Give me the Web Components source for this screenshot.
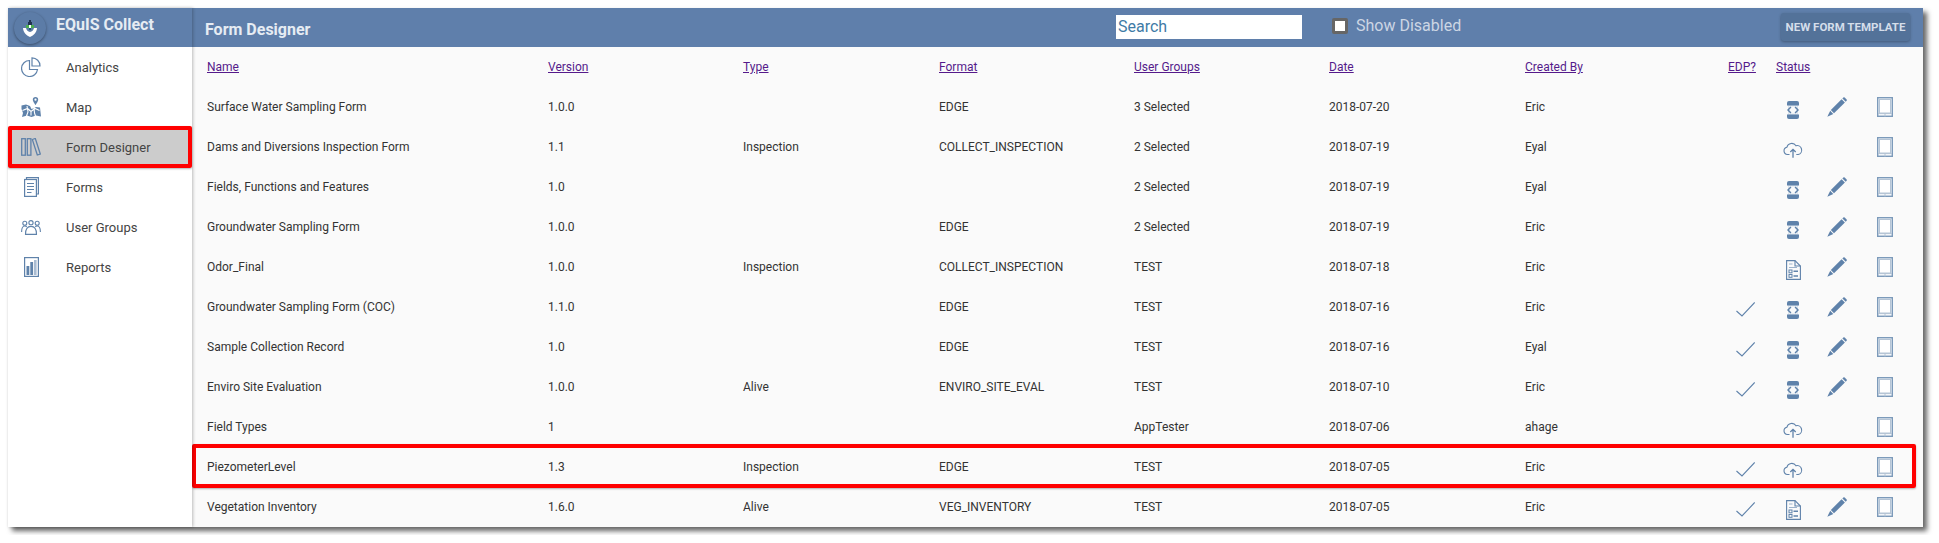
<!DOCTYPE html>
<html>
<head>
<meta charset="utf-8">
<title>EQuIS Collect</title>
<style>
  html, body { margin: 0; background: #fff; }
  body { padding: 8px 16px 8px 8px; font-family: Roboto, "Liberation Sans", sans-serif; }
</style>
</head>
<body>
<app-window>
  <side-nav slot="side" title-text="EQuIS Collect">
    <nav-item icon="pie">Analytics</nav-item>
    <nav-item icon="map">Map</nav-item>
    <nav-item icon="books" active>Form Designer</nav-item>
    <nav-item icon="forms">Forms</nav-item>
    <nav-item icon="users">User Groups</nav-item>
    <nav-item icon="bars">Reports</nav-item>
  </side-nav>
  <top-bar slot="top">Form Designer</top-bar>
  <form-table slot="main"></form-table>
</app-window>

<script>
const BLUE = '#5f82aa';

// icons are all drawn by hand to match the reference
const ICONS = {
  pie: `<svg width="20" height="20" viewBox="0 0 20 20" fill="none" stroke="${BLUE}" stroke-width="1.2"><path d="M8.500 3.500a8 8 0 1 0 8 9h-8z"/><path d="M11 .8a8 8 0 0 1 8 8.200h-8z"/></svg>`,
  map: `<svg width="20" height="20" viewBox="0 0 20 20" fill="${BLUE}"><path d="M14.500 0a2.700 2.700 0 0 1 2.700 2.700c0 1.800-2.700 5.300-2.700 5.300s-2.700-3.500-2.700-5.300A2.700 2.700 0 0 1 14.500 0zm0 1.600a1.100 1.100 0 1 0 0 2.200 1.100 1.100 0 0 0 0-2.200z"/><path d="M.5 8.500l4.500-1 4 1.500 1.500 3 3-1 1.500-1 4 .5 1 9-5-1-4.500 1.500-4.500-1.500-5 1.500 1-4-1.500-4z"/><path d="M1.500 13.500l5-2 3.500 3 4-3 4.500 2M6 9l1 6-1.500 4M13 11l.5 5 1 3M10 14.500v4" fill="none" stroke="#fff" stroke-width="1.100"/></svg>`,
  books: `<svg width="20" height="18" viewBox="0 0 20 18" fill="none" stroke="${BLUE}" stroke-width="1.300"><rect x=".7" y=".7" width="3.600" height="16.500"/><rect x="6.300" y=".7" width="3.600" height="16.500"/><path d="M11.300 1.500l3-1 5 15.500-3 1z"/></svg>`,
  forms: `<svg width="15" height="20" viewBox="0 0 15 20" fill="none" stroke="${BLUE}" stroke-width="1.200"><path d="M2.500 2.500V.6h11.900v16.400h-2"/><rect x=".6" y="2.500" width="11.800" height="16.900"/><path d="M3 6.500h7M3 9.500h7M3 12.500h7M3 15.500h4.500"/></svg>`,
  users: `<svg width="20" height="15" viewBox="0 0 20 15" fill="none" stroke="${BLUE}" stroke-width="1.100"><circle cx="3.800" cy="3.200" r="2"/><circle cx="10" cy="2.700" r="2.100"/><circle cx="16.200" cy="3.200" r="2"/><path d="M.6 12c0-3.500 1-6 3.200-6 .9 0 1.500.3 2 .8M19.400 12c0-3.500-1-6-3.200-6-.9 0-1.500.3-2 .8"/><path d="M4.500 14.400c0-5 2-8 5.500-8s5.500 3 5.500 8z"/></svg>`,
  bars: `<svg width="15" height="20" viewBox="0 0 15 20" fill="${BLUE}"><rect x=".6" y=".6" width="13.800" height="18.800" fill="none" stroke="${BLUE}" stroke-width="1.200"/><rect x="2.500" y="9" width="2.800" height="9"/><rect x="6.300" y="5" width="2.800" height="13"/><rect x="10" y="3" width="2.600" height="15" fill="#a9bcd2"/></svg>`,
  code: `<svg width="12" height="18" viewBox="0 0 12 18"><path d="M1 3h10v12H1z" fill="#dbe3ec"/><path d="M2 0h8a2 2 0 0 1 2 2v2.500H0V2a2 2 0 0 1 2-2zM0 13.500h12V16a2 2 0 0 1-2 2H2a2 2 0 0 1-2-2z" fill="${BLUE}"/><path d="M2 5.500h8v7H2z" fill="#fafafa"/><path d="M3.900 6L1 9l2.900 3M8.100 6L11 9l-2.900 3" fill="none" stroke="${BLUE}" stroke-width="1.500"/></svg>`,
  cloud: `<svg width="20" height="16" viewBox="0 0 20 16" fill="none" stroke="${BLUE}" stroke-width="1.100"><path d="M6.500 12.500H4.500a3.700 3.700 0 0 1-.6-7.300A5 5 0 0 1 13 3.800a4.400 4.400 0 0 1 2.300 8.700h-2"/><path d="M10 15.800V7.500M7.300 10L10 7.300 12.700 10" stroke-width="1.300"/></svg>`,
  doc: `<svg width="15" height="20" viewBox="0 0 15 20" fill="none" stroke="${BLUE}" stroke-width="1.100"><path d="M.6.600h8.400l5.400 5.400v13.400H.6z"/><path d="M9 .600V6h5.400"/><path d="M3 4h3.500M3 7.500h8" stroke="#9db3cb"/><rect x="3" y="10" width="3" height="2.800" stroke-width="1"/><rect x="3" y="14.500" width="3" height="2.800" stroke-width="1"/><path d="M7.500 11.300H12M7.500 16H12" stroke-width="1.400"/></svg>`,
  pencil: `<svg width="20" height="20" viewBox="0 0 20 20" fill="${BLUE}"><path d="M3.800 13L14.600 2.200l3.300 3.300L7 16.300z"/><path d="M15.400 1.400l.9-.9a1 1 0 0 1 1.400 0l1.900 1.900a1 1 0 0 1 0 1.400l-.9.9z"/><path d="M3.200 13.800L6.300 16.900.3 19.700z"/></svg>`,
  tablet: `<svg width="16" height="20" viewBox="0 0 16 20"><rect x=".7" y=".7" width="14.600" height="18.600" fill="#f2f5f8" stroke="#7c9aba" stroke-width="1.400"/><rect x="2.500" y="2.500" width="11" height="13.500" fill="#fff" stroke="#b5c4d5"/><path d="M1 16.500h14M8 16.500v3" stroke="#b5c4d5"/></svg>`,
  check: `<svg width="19" height="15" viewBox="0 0 19 15" fill="none" stroke="${BLUE}" stroke-width="1.100"><path d="M.5 9l5.500 5L18.700.5"/></svg>`,
};

customElements.define('app-window', class extends HTMLElement {
  constructor() {
    super();
    this.attachShadow({ mode: 'open' });
    this.shadowRoot.innerHTML = `
      <style>
      :host {
        display: grid;
        grid-template-columns: 184px minmax(0, 1fr);
        grid-template-rows: 39px 480px;
        height: 519px;
        background: #fafafa;
        box-shadow: 4px 4px 5px #666;
        position: relative;
      }
      ::slotted([slot=side]) { grid-row: 1 / 3; }
      .mark {
        position: absolute;
        left: 184px;
        top: 436px;
        width: 1724px;
        height: 44px;
        box-sizing: border-box;
        border: 4px solid #f00;
        border-radius: 2px;
        box-shadow: 0 1px 2px rgba(0,0,0,.3);
        pointer-events: none;
      }
      </style>
      <slot name="side"></slot>
      <slot name="top"></slot>
      <slot name="main"></slot>
      <div class="mark"></div>
    `;
  }
});

customElements.define('side-nav', class extends HTMLElement {
  constructor() {
    super();
    this.attachShadow({ mode: 'open' });
    this.shadowRoot.innerHTML = `
      <style>
      :host {
        display: block;
        background: #fff;
        box-shadow: 1px 0 3px rgba(0,0,0,.25);
        position: relative;
        z-index: 1;
      }
      header {
        height: 39px;
        background: #5f7fab;
        display: flex;
        align-items: flex-start;
        gap: 10px;
        padding: 4px 0 0 6px;
        box-sizing: border-box;
      }
      .logo {
        width: 32px;
        height: 32px;
        border-radius: 50%;
        background: #5c7ca7;
        box-shadow: 0 1px 3px rgba(0,0,0,.4);
        display: flex;
        align-items: center;
        justify-content: center;
        flex: none;
      }
      h1 {
        margin: 0;
        font: 700 16px/26px Roboto, sans-serif;
        color: #e6ecf3;
      }
      </style>
      <header>
        <div class="logo">
          <svg width="14" height="17" viewBox="0 0 14 17">
            <rect x="6" y="0" width="2" height="2" fill="#1f3350"/>
            <rect x="5" y="2" width="4" height="3" fill="#1f3350"/>
            <rect x="3" y="5" width="3" height="3" fill="#4caf50"/>
            <rect x="8" y="5" width="3" height="3" fill="#4caf50"/>
            <rect x="6" y="5" width="2" height="3" fill="#fff"/>
            <rect x="6" y="8" width="2" height="2" fill="#1f5f6f"/>
            <path d="M0 8l3 0c.5 2.500 2 3.500 4 4 2-.5 3.500-1.500 4-4l3 0c-.3 4-3 7.500-7 9-4-1.500-6.700-5-7-9z" fill="#fff"/>
          </svg>
        </div>
        <h1>${this.getAttribute('title-text')}</h1>
      </header>
      <slot></slot>
    `;
  }
});

customElements.define('nav-item', class extends HTMLElement {
  constructor() {
    super();
    this.attachShadow({ mode: 'open' });
    this.shadowRoot.innerHTML = `
      <style>
      :host {
        display: flex;
        align-items: center;
        height: 40px;
        font: 13px Roboto, sans-serif;
        color: #444;
        position: relative;
      }
      :host([active]) { background: #ccc; }
      .icon {
        width: 20px;
        margin: 0 25px 0 13px;
        display: flex;
        align-items: center;
        justify-content: center;
        flex: none;
      }
      .mark {
        display: none;
        position: absolute;
        inset: -1px 0 -1px 0;
        border: 4px solid #f00;
        border-radius: 2px;
        box-shadow: 0 1px 2px rgba(0,0,0,.3);
      }
      :host([active]) .mark { display: block; }
      </style>
      <span class="icon">${ICONS[this.getAttribute('icon')]}</span>
      <slot></slot>
      <span class="mark"></span>
    `;
  }
});

customElements.define('top-bar', class extends HTMLElement {
  constructor() {
    super();
    this.attachShadow({ mode: 'open' });
    this.shadowRoot.innerHTML = `
      <style>
      :host {
        display: flex;
        align-items: center;
        height: 39px;
        background: #5f7fab;
        padding: 0 13px;
        font-family: Roboto, sans-serif;
      }
      h2 {
        margin: 0;
        width: 911px;
        flex: none;
        font: 700 16px Roboto, sans-serif;
        color: #e6ecf3;
        padding-top: 4px;
      }
      input[type=text] {
        width: 186px;
        height: 24px;
        box-sizing: border-box;
        border: 0;
        padding: 0 2px;
        margin: -2px 30px 0 0;
        font: 16px Roboto, sans-serif;
        background: #fff;
        flex: none;
      }
      input::placeholder { color: #3f7ba6; opacity: 1; }
      .box {
        width: 16px;
        height: 16px;
        box-sizing: border-box;
        border: 3px solid #666;
        border-radius: 2px;
        background: #fff;
        flex: none;
        margin: -3px 8px 0 0;
      }
      label {
        color: #ccd6e4;
        font-size: 16px;
        margin-top: -4px;
        flex: 1;
        min-width: 0;
      }
      button {
        flex: none;
        width: 129px;
        height: 28px;
        margin-top: -1px;
        border: 0;
        border-radius: 3px;
        background: #537299;
        color: #d5deea;
        font: 700 11.5px Roboto, sans-serif;
        box-shadow: 0 1px 3px rgba(0,0,0,.3);
        padding: 0;
        white-space: nowrap;
      }
      </style>
      <h2><slot></slot></h2>
      <input type="text" placeholder="Search">
      <span class="box"></span>
      <label>Show Disabled</label>
      <button>NEW FORM TEMPLATE</button>
    `;
  }
});

const COLUMNS = '341px 195px 196px 195px 195px 196px 203px 48px 34px 54px 42px';

customElements.define('form-row', class extends HTMLElement {
  constructor() {
    super();
    this.attachShadow({ mode: 'open' });
    const [name, version, type, format, groups, date, by] = JSON.parse(this.getAttribute('cells'));
    const status = this.getAttribute('status');
    this.shadowRoot.innerHTML = `
      <style>
      :host {
        display: grid;
        grid-template-columns: ${COLUMNS};
        align-items: center;
        height: 40px;
        font: 12px Roboto, sans-serif;
        color: #333;
      }
      .ic { display: flex; justify-content: center; }
      .check { justify-content: flex-start; padding: 5px 0 0 8px; }
      .status { padding-top: 5px; }
      </style>
      <span>${name}</span><span>${version}</span><span>${type}</span><span>${format}</span>
      <span>${groups}</span><span>${date}</span><span>${by}</span>
      <span class="ic check">${this.hasAttribute('edp') ? ICONS.check : ''}</span>
      <span class="ic status">${ICONS[status]}</span>
      <span class="ic pencil">${this.hasAttribute('edit') ? ICONS.pencil : ''}</span>
      <span class="ic tablet">${ICONS.tablet}</span>
    `;
  }
});

customElements.define('form-table', class extends HTMLElement {
  constructor() {
    super();
    this.attachShadow({ mode: 'open' });
    const heads = ['Name', 'Version', 'Type', 'Format', 'User Groups', 'Date', 'Created By', 'EDP?', 'Status'];
    const rows = [
      ['Surface Water Sampling Form', '1.0.0', '', 'EDGE', '3 Selected', '2018-07-20', 'Eric', 0, 'code', 1],
      ['Dams and Diversions Inspection Form', '1.1', 'Inspection', 'COLLECT_INSPECTION', '2 Selected', '2018-07-19', 'Eyal', 0, 'cloud', 0],
      ['Fields, Functions and Features', '1.0', '', '', '2 Selected', '2018-07-19', 'Eyal', 0, 'code', 1],
      ['Groundwater Sampling Form', '1.0.0', '', 'EDGE', '2 Selected', '2018-07-19', 'Eric', 0, 'code', 1],
      ['Odor_Final', '1.0.0', 'Inspection', 'COLLECT_INSPECTION', 'TEST', '2018-07-18', 'Eric', 0, 'doc', 1],
      ['Groundwater Sampling Form (COC)', '1.1.0', '', 'EDGE', 'TEST', '2018-07-16', 'Eric', 1, 'code', 1],
      ['Sample Collection Record', '1.0', '', 'EDGE', 'TEST', '2018-07-16', 'Eyal', 1, 'code', 1],
      ['Enviro Site Evaluation', '1.0.0', 'Alive', 'ENVIRO_SITE_EVAL', 'TEST', '2018-07-10', 'Eric', 1, 'code', 1],
      ['Field Types', '1', '', '', 'AppTester', '2018-07-06', 'ahage', 0, 'cloud', 0],
      ['PiezometerLevel', '1.3', 'Inspection', 'EDGE', 'TEST', '2018-07-05', 'Eric', 1, 'cloud', 0],
      ['Vegetation Inventory', '1.6.0', 'Alive', 'VEG_INVENTORY', 'TEST', '2018-07-05', 'Eric', 1, 'doc', 1],
    ];
    const attr = s => JSON.stringify(s).replace(/"/g, '&quot;');
    this.shadowRoot.innerHTML = `
      <style>
      :host {
        display: block;
        padding-left: 15px;
        background: #fafafa;
        overflow: hidden;
      }
      .head {
        display: grid;
        grid-template-columns: ${COLUMNS};
        align-items: center;
        height: 40px;
        font: 12px Roboto, sans-serif;
      }
      a { color: #551a8b; text-decoration: underline; }
      </style>
      <div class="head">${heads.map(h => `<span><a href="#">${h}</a></span>`).join('')}</div>
      ${rows.map(r => `<form-row cells="${attr(r.slice(0, 7))}" status="${r[8]}"${r[7] ? ' edp' : ''}${r[9] ? ' edit' : ''}></form-row>`).join('')}
    `;
  }
});
</script>
</body>
</html>
